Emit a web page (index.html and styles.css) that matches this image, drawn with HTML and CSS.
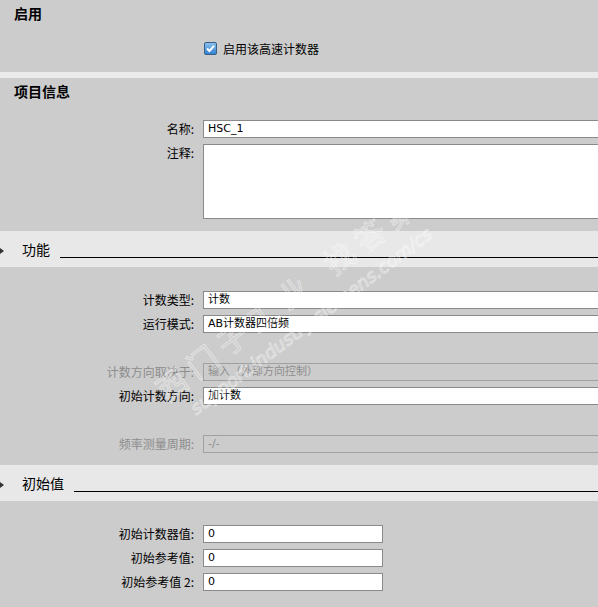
FILE: index.html
```html
<!DOCTYPE html>
<html>
<head>
<meta charset="utf-8">
<link rel="stylesheet" href="styles.css">
</head>
<body>
<div class="page">
  <div class="group">
    <div class="group-title">启用</div>
    <div class="check-row">
      <svg class="checkbox" width="13" height="13" viewBox="0 0 13 13">
        <defs>
          <linearGradient id="cbg" x1="0" y1="0" x2="0" y2="1">
            <stop offset="0" stop-color="#8fc3ee"/>
            <stop offset="1" stop-color="#2f7fcf"/>
          </linearGradient>
        </defs>
        <rect x="0.5" y="0.5" width="12" height="12" rx="1.5" fill="url(#cbg)" stroke="#3a5f86"/>
        <path d="M3 6.5 L5.4 9 L10 3.8" fill="none" stroke="#ffffff" stroke-width="2"/>
      </svg>
      <span>启用该高速计数器</span>
    </div>
  </div>
  <div class="divider"></div>
  <div class="group">
    <div class="group-title">项目信息</div>
    <div class="form info">
      <label class="lbl">名称:</label><div class="field">HSC_1</div>
      <label class="lbl">注释:</label><div class="field area"></div>
    </div>
  </div>

  <div class="section"><span class="arrow"></span><span class="section-name">功能</span><span class="rule"></span></div>
  <div class="form body">
    <label class="lbl">计数类型:</label><div class="field">计数</div>
    <label class="lbl">运行模式:</label><div class="field">AB计数器四倍频</div>
    <div class="spacer"></div><div class="spacer"></div>
    <label class="lbl off">计数方向取决于:</label><div class="field off">输入（外部方向控制）</div>
    <label class="lbl">初始计数方向:</label><div class="field">加计数</div>
    <div class="spacer"></div><div class="spacer"></div>
    <label class="lbl off">频率测量周期:</label><div class="field off">-/-</div>
  </div>

  <div class="section"><span class="arrow"></span><span class="section-name">初始值</span><span class="rule"></span></div>
  <div class="form body short">
    <label class="lbl">初始计数器值:</label><div class="field">0</div>
    <label class="lbl">初始参考值:</label><div class="field">0</div>
    <label class="lbl">初始参考值 2:</label><div class="field">0</div>
  </div>

  <div class="watermark">
    <div class="wm-big">西门子工业<span class="wm-gap"></span>找答案</div>
    <div class="wm-small">support.industry.siemens.com/cs</div>
  </div>
</div>
</body>
</html>
```
FILE: styles.css
```css
html, body {
  margin: 0;
  padding: 0;
  background: #cccccc;
  overflow: hidden;
}
body {
  font-family: "Noto Sans CJK SC", "DejaVu Sans", sans-serif;
  font-size: 12px;
  color: #000;
}
.page {
  position: relative;
  width: 598px;
  height: 607px;
  overflow: hidden;
}
.group-title {
  height: 28px;
  line-height: 27px;
  padding-left: 14px;
  font-size: 14px;
  font-weight: bold;
}
.check-row {
  display: flex;
  align-items: center;
  gap: 6px;
  height: 13px;
  margin-top: 14px;
  margin-bottom: 17px;
  padding-left: 204px;
  line-height: 13px;
}
.checkbox { display: block; flex: none; }
.divider {
  height: 6px;
  background: #ebebeb;
}
.form {
  display: grid;
  grid-template-columns: 194px 420px;
  column-gap: 9px;
  row-gap: 6px;
  grid-auto-rows: 18px;
}
.form.info {
  padding-top: 14px;
  padding-bottom: 12px;
  grid-template-rows: 18px 75px;
}
.form.body {
  padding-top: 24px;
  padding-bottom: 12px;
}
.form.short {
  grid-template-columns: 194px 180px;
}
.lbl {
  text-align: right;
  line-height: 18px;
  white-space: nowrap;
}
.lbl.off { color: #8c8c8c; }
.field {
  box-sizing: border-box;
  background: #ffffff;
  border: 1px solid #8a8a8a;
  padding-left: 4px;
  line-height: 16px;
  font-family: "DejaVu Sans", "Noto Sans CJK SC", sans-serif;
  font-size: 11px;
  white-space: nowrap;
  overflow: hidden;
}
.field.area { height: 75px; }
.field.off {
  background: transparent;
  border-color: #a0a0a0;
  color: #8c8c8c;
}
.section {
  display: flex;
  height: 36px;
  background: #e8e8e8;
}
.arrow {
  flex: none;
  width: 0;
  height: 0;
  margin-top: 17px;
  border-top: 3px solid transparent;
  border-bottom: 3px solid transparent;
  border-left: 4px solid #333;
}
.section-name {
  flex: none;
  margin-left: 18px;
  line-height: 36px;
  font-size: 14px;
}
.rule {
  flex: 1;
  height: 1px;
  margin-top: 26px;
  margin-left: 10px;
  background: #000;
}
.watermark {
  position: absolute;
  left: 148px;
  top: 378px;
  transform: rotate(-37deg);
  transform-origin: 0 0;
  pointer-events: none;
  white-space: nowrap;
  color: transparent;
  -webkit-text-stroke: 1px rgba(255, 255, 255, 0.45);
  font-family: "DejaVu Sans", "Noto Sans CJK SC", sans-serif;
}
.wm-big {
  font-size: 30px;
  line-height: 42px;
  letter-spacing: 8px;
}
.wm-gap { display: inline-block; width: 20px; }
.wm-small {
  font-size: 18px;
  line-height: 22px;
  font-style: italic;
  margin-left: 16px;
}
```
